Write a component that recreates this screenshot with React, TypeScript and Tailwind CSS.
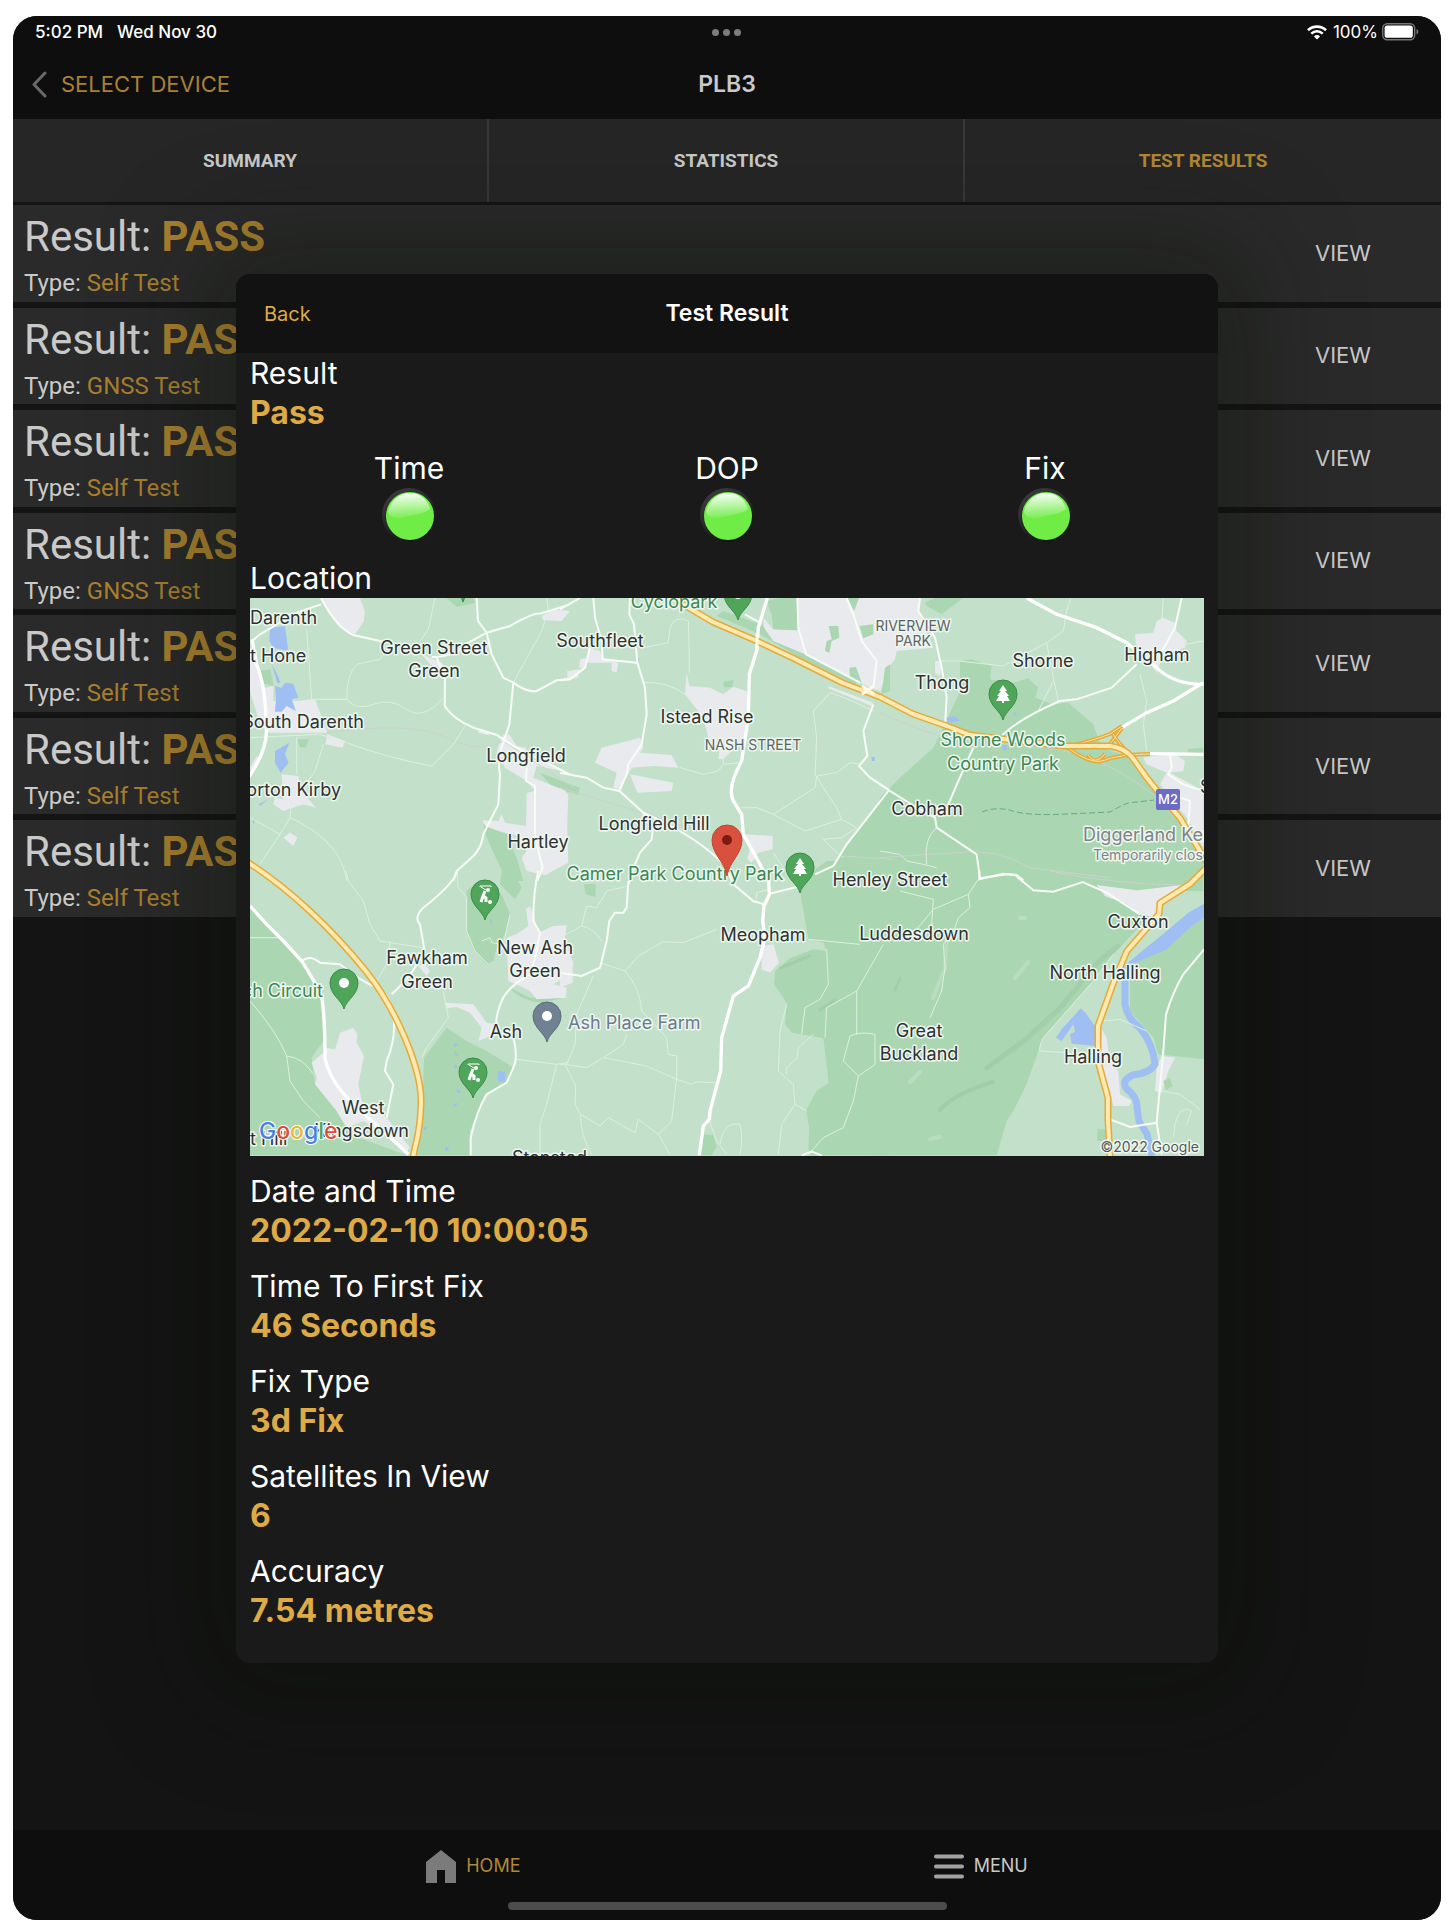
import { clsx } from 'clsx'

type Row = { result: string; type: string }

const rows: Row[] = [
  { result: 'PASS', type: 'Self Test' },
  { result: 'PASS', type: 'GNSS Test' },
  { result: 'PASS', type: 'Self Test' },
  { result: 'PASS', type: 'GNSS Test' },
  { result: 'PASS', type: 'Self Test' },
  { result: 'PASS', type: 'Self Test' },
  { result: 'PASS', type: 'Self Test' },
]

const tabs = ['SUMMARY', 'STATISTICS', 'TEST RESULTS']
const lights = ['Time', 'DOP', 'Fix']

const details = [
  { label: 'Date and Time', value: '2022-02-10 10:00:05' },
  { label: 'Time To First Fix', value: '46 Seconds' },
  { label: 'Fix Type', value: '3d Fix' },
  { label: 'Satellites In View', value: '6' },
  { label: 'Accuracy', value: '7.54 metres' },
]

// The map is split in six tiles, each drawn at three times the size it is shown at.
type Tile = {
  at: [number, number]
  woods: string
  towns: string
  greens?: string
  water?: string
  lanes: string
  rail?: string
  roads: string
  major: string
}

const tiles: Tile[] = [
  {
    at: [-10, -7],
    woods:
      'M620 21L700 21L705 35L650 48Z M60 240L92 235L100 285L62 275Z M172 445h35l-10 25l-18-2Z M730 700L800 730L830 800L850 870L800 870L740 740Z M900 545L990 580L990 605L930 580Z',
    towns:
      'M243 21L360 21L374 60L372 90L345 130L300 110L262 60Z M30 170L50 210L75 290L100 285L100 330L175 330L225 323L262 425L88 425L60 400L30 300Z M262 430L315 450L308 470L256 460Z M125 550L175 555L185 600L228 650L190 640L130 660L100 640L105 620L130 625Z M130 740L150 725L172 740L160 765Z M905 75L940 55L990 60L965 90L910 88Z M545 190l60 25l10 15l-40-5Z M30 530l20-35l10 10l-25 45Z M790 430L808 430L830 465L858 470L862 500L900 510L968 540L890 525L880 560L978 600L985 815L915 852L860 840L845 800L860 780L840 735L775 720L735 705L728 688L775 690L785 670L795 695L858 705L860 605L885 600L860 570L795 530L770 480Z M715 415l35 8l-5 10l-30-8Z',
    water:
      'M90 110L135 105L145 180L120 175L100 170L88 150Z M105 285L125 290L135 275L160 278L175 320L155 325L168 360L140 345L125 362L105 362L108 320Z M105 480L148 455L135 490L146 515L122 545L105 515Z M95 220l12 20l15 35l-10 0Z M55 640l30-15l-25 20Z M38 690l8-10l-6 22Z',
    lanes:
      'M200 115L215 325L320 325Q320 250 350 220L420 205L450 165M540 150L565 115L585 21M320 325Q350 360 400 340T500 355T610 320M30 440L240 430L320 455Q440 500 575 525L640 460L675 405M170 440V550M250 460L225 540L190 590M30 680L120 730L150 680L155 630M150 680Q280 740 310 830L322 870M120 730L60 820M820 275L850 220L905 120L925 60L920 21',
    rail: 'M260 425Q520 390 620 440T790 450L1000 590',
    roads:
      'M243 40L170 65L60 130L36 150M243 21Q290 110 340 132L430 152M575 198Q640 200 680 158L740 125L810 105Q880 65 900 68L990 40M710 21L714 90L740 125L755 190L790 260L820 275Q860 305 890 300L950 268L990 264M590 200L615 260L614 345Q640 385 700 410L770 432L820 465L990 550M820 275L808 400L790 455Q770 500 780 550L775 640L730 730Q725 770 700 795L650 840L640 870M860 530L858 570L885 585L885 740L908 830L892 870',
    major: 'M36 145L50 220Q78 290 78 400Q88 470 25 560',
  },
  {
    at: [310, -7],
    woods:
      'M490 60L600 100L760 200L900 270L885 280L720 200L600 130L470 75Z M490 272l30-5l-3 22l-25 0Z M0 570L60 590L55 612L0 590Z M990 600L860 760L820 825L760 850L720 900L1000 900Z',
    towns:
      'M610 80L640 115L714 118L714 21L990 21L990 225L960 300L930 290L735 190L640 150L612 110Z M380 245L388 285L450 290L490 310L520 288L560 300L565 420L545 450L490 505L475 505L478 480L445 440L430 380L375 310Z M125 470L240 440L250 470L240 485L335 492L355 530L280 525L215 530L180 595L160 590L170 545L105 515Z M210 550L340 575L335 600L232 605Z M85 170L120 180L128 205L175 215L170 245L155 240L155 215L80 215L75 235L58 230L60 205L80 200Z M22 240l40-5l-10 25l-30 5Z M0 590L25 610L20 740L0 800Z M555 730L638 735L638 775L595 785L575 815L562 805L570 770Z M805 285L940 335L935 345L805 292Z',
    greens:
      'M620 30L660 21L712 21L710 118L640 115L635 70Z M806 105L835 105L838 140L815 150L808 185L795 180L800 150L815 145Z M868 230L888 228L905 275L870 265Z M862 21h35l-15 40Z M898 105l42-5v30l-30 12Z M975 230L990 220L990 300L965 310Z',
    water: 'M934 498l10 0l0 12l-8 0Z M230 202l8 2l-2 8l-6-2Z',
    lanes:
      'M250 275Q320 270 375 310M250 170L325 155L330 110Q345 70 385 90L388 200V245M360 530L430 550L475 540L490 520L540 515M490 505V520M810 305Q860 320 940 360M900 520L870 515L830 545L770 555L765 590L640 670L590 650L545 650M770 555L790 590L830 650L845 685M640 670L735 720L845 685L890 710L845 740L790 745L815 770L850 800M810 305L760 360L770 440L765 555M640 785L670 830',
    rail: 'M0 590L230 660L420 720M850 795L1000 805',
    roads:
      'M0 55L60 21M100 21L105 80L125 150L128 205L230 215M210 21L208 70L222 100L232 215L255 290L260 370L245 460L205 520L200 550L178 600M0 268L30 265L75 230L90 170M0 545L80 560L130 590L178 600L250 665L278 715L275 745L240 785L225 820L205 880M250 665Q420 740 500 830L520 880M555 70L600 95M712 21L715 110L738 190L900 275M860 21L880 70L905 150L950 210L940 290M940 340L910 420L922 495L897 525L930 560L985 595M985 600L860 760L820 825L765 850',
    major: 'M622 21L595 110L590 180L568 250L565 380L545 510Q500 590 520 630L545 670L550 730L600 820L625 870',
  },
  {
    at: [630, -7],
    woods:
      'M240 210L275 205L335 225L330 265L400 275L445 262L475 290L465 320L520 340L565 335L640 400L665 470L760 500L860 640L970 800V900H0V620L60 560L160 470L195 400L240 300Z M135 35L165 21L250 21L185 70L140 45Z M920 475l50-5v20l-35 5Z',
    towns:
      'M0 21L120 21L115 60L160 170L50 180L45 205L0 260Z M165 210h20l-5 45l-15-10Z M765 130L820 125L830 90L850 80L885 95L890 120L920 150L915 170L850 190L830 245L800 200L768 160Z M790 500L880 485L915 510L910 540L870 545L970 600L970 770L920 680L840 580L860 545L800 520Z',
    water: 'M198 380L225 375L240 390L205 395Z M365 462h15v15h-12Z M400 362l12 8l-8 4Z',
    lanes:
      'M180 210L240 210L280 215L370 225L500 155L550 120L560 60L572 21M500 155L520 260L535 330M520 270L475 360M850 21L845 90M800 480L790 400L800 330L780 250M970 150L890 165M140 820Q130 740 170 710M0 780L60 790L80 810L130 820L170 830',
    rail: 'M0 365Q120 420 200 440L540 475Q700 510 830 620L970 770M0 800L230 785Q350 770 450 830L690 860',
    roads:
      'M120 21L115 60L165 140L185 230L200 320L195 410M280 470L235 570L205 640M350 450Q400 390 540 330L590 325L695 290L770 220M905 21L885 110L835 200M0 580L30 600L110 650L165 680L170 710L290 790L300 862L380 850L410 852L430 868M870 490L875 530L865 550L910 580L970 600M900 620L930 630L925 700L940 760',
    major: 'M440 21L530 70L650 110L740 155L830 230Q880 280 970 280M970 275L880 330L800 365L725 410M810 488L970 490',
  },
  {
    at: [-10, 273],
    woods:
      'M30 105L185 270L240 370L250 510L215 560L225 640L290 720L330 790L500 853H30Z M680 60Q740 0 790 80L810 130L795 190L770 230L760 270L740 280L700 235L680 180Z M785 0L820 0L845 50L825 85L780 40Z M620 470L680 510L740 540L820 590L800 640L735 670L690 780L690 853L520 853L545 780L552 560Z M810 350l60 30h100l-60 15Q840 390 810 350Z',
    towns:
      'M290 520L300 485L340 470L352 490L350 515L372 555L355 640L365 690L440 740L510 830L500 840L420 780L370 750L320 770L290 720L225 640L230 620L215 575L250 545L255 530L285 535Z M858 115L870 105L880 130L895 185L940 165L980 163L975 200L1000 280L990 310L940 340L980 350L978 380L890 385L870 360L840 345L805 330L800 200L830 190L865 165Z M615 395L700 400L740 455L770 460L765 490L715 510L725 470L690 425L650 408L620 412Z M535 285l20-5l15 20l-10 15Z M890 0h45l-15 12Z',
    water:
      'M775 600l20 3v30l-22-2Z M640 515l15 5l-10 8Z M645 540l12 15l-12-3Z M645 580l10 10l-12 2Z M648 652l18 12l-14 2Z M640 700l14-4l-8 12Z M615 828h10v12h-10Z M750 145l8 5l-5 8Z M552 768h8v8h-8Z',
    lanes:
      'M30 200H115M318 0L325 30L370 90L390 160L420 210L550 230M450 210L440 280L410 330M30 390Q110 480 140 555L150 630L190 690L240 740M140 555Q190 560 220 610M610 360L625 440L560 530L545 560M650 0L655 50L680 80V180L705 240L745 280M725 210L750 200L755 215L790 220L810 130M830 565L950 580L985 575M950 580L920 700L900 760V853',
    roads:
      'M185 270Q210 250 240 275L300 280Q360 330 410 350Q450 370 460 430Q470 500 440 570L435 600L460 640L440 740M455 370Q530 300 553 235L540 160Q520 140 550 110Q640 40 652 0M895 0Q880 60 880 150L900 185L885 260L870 310Q800 350 785 390Q765 440 770 460M820 500Q835 560 820 590L800 635L740 670Q710 720 692 800V853',
    major: 'M30 105L80 160L130 210L185 270L240 360Q255 400 255 560Q265 620 330 690L440 790L505 850',
  },
  {
    at: [310, 273],
    woods:
      'M720 60L745 205L790 215L800 240L760 235L690 262L645 300L642 340L680 395L675 460L695 485L790 502L806 635L770 660L738 718L748 770L745 835L755 853L1000 853V-30L800-30L760 0Z M72 40l35-2v40l-30-8Z M430 790l30 3l10 35l-15 25h-35Z',
    towns: 'M605 225L640 220L657 275L630 305L605 295Z M0 265L38 268V335L0 350Z',
    lanes:
      'M0 200L65 165Q100 170 125 210M65 165L80 105L110 110L140 60L205 45M120 275L195 300L235 255L310 212L370 215L470 175M195 300Q240 350 245 420L320 500L325 550L350 555V620L335 750L295 790L235 745L225 785L145 740L120 765L62 730L45 700L47 645L15 580M100 315L50 430L45 520L20 580H0M15 580L80 590L130 560L190 520L200 490M130 560L260 585L350 625L395 640L410 633L465 635M62 730Q60 790 95 850M295 790L330 850M590 85V65L630 55M745 205L900 220M800 235L805 340L780 385L735 410L725 490M970 220L890 360L800 410L795 500M890 360V490M680 400L660 480L655 600L700 640L705 700L665 760L655 850M760 490L715 530L712 560L680 590V610M870 495Q900 480 945 490V580L895 615L850 570L870 495M895 615L880 690L850 770L790 800L755 840M705 700L740 720M445 740L470 810L500 850M480 820Q490 750 540 760Q550 800 540 850',
    roads:
      'M205 30L200 110L190 125L165 125L148 150L140 210L120 290L65 315L0 305M520 40L580 90L612 100M628 68L710 48M725 853L755 842L785 853',
    major:
      'M625 0L628 70L612 105L608 150L615 200L600 260L565 345L520 375L485 500L482 600L450 720L448 745L430 765L418 853',
  },
  {
    at: [630, 273],
    woods:
      'M-30-30H900V40L700 250L640 330L490 500L475 540L440 640L400 720L380 750L350 853H-30Z M972 140L750 280V420L820 500L835 550L972 565Z',
    towns:
      'M650 42L770 58L800 55L905 42L840 95L830 140L780 130L740 100L675 75Z M665 475L680 500L690 580L715 600L720 670L755 690L748 705L700 705L690 660L660 580Z M845 555L885 560L865 600L845 665L825 660L830 590Z',
    greens: 'M850 630l20-10l8 25l-20 12Z M652 775h28v35h-28Z',
    water:
      'M972 98L925 125L860 180L725 290V330H745L745 285L860 235L935 165L972 140Z M602 412L620 430L655 480L650 525L575 518L570 490L585 482L580 460L545 510L528 500L545 475Z',
    lanes:
      'M60 60L160 85L155 165M110 175L160 115L265 70L295 25M265 70L270 110L235 140L225 170L190 220L195 290L185 360L150 440M700 250L640 330L490 500Q475 530 480 540L560 545M845 660L900 670L960 715M880 800L885 760Q900 700 935 720L920 760M670 450L720 445L800 480',
    rail: 'M510 0Q700 40 905 42',
    roads:
      'M298 0V25L370 8L405 12L460 58L520 62L608 33L680 65L780 130M690 745L750 768L830 755L845 850M830 755L850 540L858 430Q880 360 910 310L972 235',
    major: '',
  },
]

const motorways = [
  'M-6 262C40 290 85 335 115 372S172 470 171 505S166 540 163 560',
  'M429 4L463 24L507 43L543 60L593 85L630 99L663 116L697 128L720 137L753 141L813 148L860 148Q874 150 882 159L897 180L913 200L930 220L950 253L958 266',
  'M956 270L940 286L910 305L909 316L877 353L863 386L848 428V463L858 500V522L860 560',
]
const slipRoads =
  'M816 149Q845 142 860 136L872 128M818 150Q840 166 852 163Q870 156 900 156M860 146L872 130M863 136Q870 148 882 158M838 157Q845 168 855 156'

type Label = { x: number; y: number; text: string; anchor?: 'start' | 'end'; tone?: string }

const labels: Label[] = [
  { x: 0, y: 26, text: 'Darenth', anchor: 'start' },
  { x: 0, y: 64, text: 't Hone', anchor: 'start' },
  { x: 114, y: 130, text: 'South Darenth', anchor: 'end' },
  { x: 91, y: 198, text: 'orton Kirby', anchor: 'end' },
  { x: 184, y: 56, text: 'Green Street' },
  { x: 184, y: 79, text: 'Green' },
  { x: 350, y: 49, text: 'Southfleet' },
  { x: 424, y: 10, text: 'Cyclopark', tone: 'fill-[#3c8752]' },
  { x: 457, y: 125, text: 'Istead Rise' },
  { x: 793, y: 69, text: 'Shorne' },
  { x: 907, y: 63, text: 'Higham' },
  { x: 692, y: 91, text: 'Thong' },
  { x: 753, y: 148, text: 'Shorne Woods', tone: 'fill-[#3c8752]' },
  { x: 753, y: 172, text: 'Country Park', tone: 'fill-[#3c8752]' },
  { x: 677, y: 217, text: 'Cobham' },
  { x: 833, y: 243, text: 'Diggerland Kent', anchor: 'start', tone: 'fill-[#7d8487]' },
  { x: 950, y: 195, text: 'S', anchor: 'start' },
  { x: 276, y: 164, text: 'Longfield' },
  { x: 404, y: 232, text: 'Longfield Hill' },
  { x: 288, y: 250, text: 'Hartley' },
  { x: 425, y: 282, text: 'Camer Park Country Park', tone: 'fill-[#3c8752]' },
  { x: 640, y: 288, text: 'Henley Street' },
  { x: 513, y: 343, text: 'Meopham' },
  { x: 664, y: 342, text: 'Luddesdown' },
  { x: 177, y: 366, text: 'Fawkham' },
  { x: 177, y: 390, text: 'Green' },
  { x: 285, y: 356, text: 'New Ash' },
  { x: 285, y: 379, text: 'Green' },
  { x: 73, y: 399, text: 'ch Circuit', anchor: 'end', tone: 'fill-[#3c8752]' },
  { x: 256, y: 440, text: 'Ash' },
  { x: 318, y: 431, text: 'Ash Place Farm', anchor: 'start', tone: 'fill-[#6b7a90]' },
  { x: 669, y: 439, text: 'Great' },
  { x: 669, y: 462, text: 'Buckland' },
  { x: 888, y: 330, text: 'Cuxton' },
  { x: 855, y: 381, text: 'North Halling' },
  { x: 843, y: 465, text: 'Halling' },
  { x: 113, y: 516, text: 'West' },
  { x: 159, y: 539, text: 'Kingsdown', anchor: 'end' },
  { x: 0, y: 547, text: 't Hill', anchor: 'start' },
  { x: 262, y: 566, text: 'Stansted', anchor: 'start' },
]

const districts = [
  { x: 503, y: 152, text: 'NASH STREET' },
  { x: 663, y: 33, text: 'RIVERVIEW' },
  { x: 663, y: 48, text: 'PARK' },
]

type PinKind = 'tree' | 'golf' | 'dot'
const pins: { x: number; y: number; kind: PinKind; grey?: boolean }[] = [
  { x: 753, y: 122, kind: 'tree' },
  { x: 550, y: 295, kind: 'tree' },
  { x: 235, y: 322, kind: 'golf' },
  { x: 223, y: 500, kind: 'golf' },
  { x: 94, y: 411, kind: 'dot' },
  { x: 488, y: 22, kind: 'dot' },
  { x: 213, y: 4, kind: 'dot' },
  { x: 297, y: 444, kind: 'dot', grey: true },
]

function Pin({ x, y, kind, grey }: { x: number; y: number; kind: PinKind; grey?: boolean }) {
  return (
    <g transform={`translate(${x} ${y})`}>
      <path
        d="M0 0C-2-9-14-14-14-26A14 14 0 1 1 14-26C14-14 2-9 0 0Z"
        fill={grey ? '#6f8192' : '#4fa65a'}
        stroke={grey ? '#5c6d7d' : '#3b8b4b'}
      />
      {kind === 'dot' && <circle cy={-26} r={5} fill="#fff" />}
      {kind === 'tree' && <path d="M0-35L4-29H2L6-24H4L7-19H1V-17H-1V-19H-7L-4-24H-6L-2-29H-4Z" fill="#fff" />}
      {kind === 'golf' && (
        <g fill="none" stroke="#fff" strokeWidth={2}>
          <path d="M-5-33V-34H6V-33" strokeWidth={1} />
          <path d="M-4-33L1-30" strokeWidth={1} />
          <path d="M0-29L-2-24L1-22V-18M-2-24L-4-18" strokeWidth={3} />
          <circle cx={3} cy={-30} r={2} fill="#fff" stroke="none" />
          <circle cx={5} cy={-18} r={2} fill="#fff" stroke="none" />
        </g>
      )}
    </g>
  )
}

function TileLayer({ layer, className }: { layer: Exclude<keyof Tile, 'at'>; className: string }) {
  return (
    <g className={className}>
      {tiles.map((tile, i) =>
        tile[layer] ? (
          <path key={i} transform={`translate(${tile.at[0]} ${tile.at[1]}) scale(${1 / 3})`} d={tile[layer]} />
        ) : null,
      )}
    </g>
  )
}

function LocationMap() {
  return (
    <svg viewBox="0 0 954 558" className="block w-full overflow-hidden bg-[#c3e1ca]" role="img" aria-label="Map of the fix location">
      <TileLayer layer="woods" className="fill-[#abd6b2]" />
      <g fill="none" stroke="#98c8a2" strokeLinecap="round" strokeLinejoin="round" opacity={0.5}>
        <path d="M737 470L775 442L810 410L850 362L868 348" strokeWidth={5} />
        <path d="M690 512Q705 495 743 484" strokeWidth={4} />
        <path d="M530 370L560 358M570 412L585 402M650 380L645 392" strokeWidth={3} />
      </g>
      <g fill="none" stroke="#c3e1ca" strokeLinecap="round" opacity={0.6}>
        <path d="M697 335L695 370L683 400M765 380L778 364M660 484L670 474M680 541L690 539M770 320h5" strokeWidth={4} />
      </g>
      <TileLayer layer="towns" className="fill-[#e8eaed]" />
      <TileLayer layer="greens" className="fill-[#abd6b2]" />
      <TileLayer layer="water" className="fill-[#9fbff3]" />
      <path
        d="M875 380V406Q877 420 890 430Q903 446 905 466Q900 475 883 477Q870 483 877 491Q888 500 887 510L889 523L897 536L902 558"
        fill="none"
        stroke="#9fbff3"
        strokeWidth={7}
      />
      <TileLayer layer="rail" className="fill-none stroke-[#c9d3cd] stroke-3" />
      <TileLayer layer="lanes" className="fill-none stroke-[#dcf0df] stroke-3" />
      <TileLayer layer="roads" className="fill-none stroke-[#f8fcf7] stroke-6" />
      <TileLayer layer="major" className="fill-none stroke-white stroke-10" />
      <path
        d="M732 214Q747 208 763 213T817 216L860 214Q870 208 878 205L904 202"
        fill="none"
        stroke="#63ab82"
        strokeDasharray="6 3"
      />
      <path d={slipRoads} fill="none" stroke="#e3ab3c" strokeWidth={4} />
      <path d={slipRoads} fill="none" stroke="#fbe3a0" strokeWidth={1} />
      <g fill="none" stroke="#e3ab3c" strokeWidth={7} strokeLinejoin="round">
        {motorways.map((d) => <path key={d} d={d} />)}
      </g>
      <g fill="none" stroke="#ffe9ae" strokeWidth={4} strokeLinejoin="round">
        {motorways.map((d) => <path key={d} d={d} />)}
      </g>
      <path d="M507 36V52M612 88L624 96M612 96L624 88" stroke="#fffbe8" strokeWidth={3} />

      {pins.map((pin) => <Pin key={`${pin.x}-${pin.y}`} {...pin} />)}

      <g className="text-[18px]" stroke="#eef7ef" strokeWidth={3} strokeLinejoin="round" paintOrder="stroke">
        {labels.map((label) => (
          <text
            key={`${label.text}-${label.y}`}
            x={label.x}
            y={label.y}
            textAnchor={label.anchor ?? 'middle'}
            className={clsx(label.tone ?? 'fill-[#2f3133]')}
          >
            {label.text}
          </text>
        ))}
        <text x={843} y={262} className="fill-[#7d8487] text-[14px]">Temporarily closed</text>
        {districts.map((district) => (
          <text key={district.text} x={district.x} y={district.y} textAnchor="middle" className="fill-[#5d6365] text-[14px]">
            {district.text}
          </text>
        ))}
        <text x={949} y={554} textAnchor="end" className="fill-[#55595b] text-[14px]">©2022 Google</text>
      </g>

      <rect x={906} y={191} width={24} height={21} rx={2} fill="#6c6cc4" />
      <text x={918} y={206} textAnchor="middle" className="fill-white text-[13px] font-medium">M2</text>

      <path d="M477 278C475 264 462 256 462 242A15 15 0 1 1 492 242C492 256 479 264 477 278Z" fill="#d9503f" stroke="#c44536" />
      <circle cx={477} cy={242} r={5} fill="#7c1b13" />

      <text x={9} y={541} className="text-[23px] font-medium" stroke="#fff" strokeWidth={2} strokeLinejoin="round" paintOrder="stroke">
        <tspan className="fill-[#4a7fe0]">G</tspan>
        <tspan className="fill-[#d94c3f]">o</tspan>
        <tspan className="fill-[#eab83b]">o</tspan>
        <tspan className="fill-[#4a7fe0]">g</tspan>
        <tspan className="fill-[#4fa65a]">l</tspan>
        <tspan className="fill-[#d94c3f]">e</tspan>
      </text>
    </svg>
  )
}

function StatusLight() {
  return (
    <svg viewBox="0 0 55 55" className="size-[55px]" role="img" aria-label="OK">
      <defs>
        <linearGradient id="rim" x1="0.2" y1="0" x2="0.8" y2="1">
          <stop offset="0" stopColor="#3c3c3c" />
          <stop offset="0.5" stopColor="#262626" />
          <stop offset="1" stopColor="#101010" />
        </linearGradient>
        <linearGradient id="shine" x1="0.45" y1="0" x2="0.55" y2="1">
          <stop offset="0" stopColor="#fff" stopOpacity={0.95} />
          <stop offset="1" stopColor="#fff" stopOpacity={0.06} />
        </linearGradient>
      </defs>
      <circle cx="27" cy="27" r="27" fill="url(#rim)" />
      <circle cx="28" cy="28" r="24" fill="#6fec46" />
      <path d="M6 24C8 13 17 5 28 5S46 12 48 21C42 27 26 27 20 30C12 31 7 28 6 24Z" fill="url(#shine)" />
    </svg>
  )
}

function StatusBar() {
  return (
    <div className="grid grid-cols-3 items-center pt-[5px] pr-[22px] pl-[22px] text-[17px] leading-[22px] font-medium text-white">
      <div className="flex gap-[14px]">
        <span>5:02 PM</span>
        <span>Wed Nov 30</span>
      </div>
      <div className="flex justify-center gap-1">
        <span className="size-[7px] rounded-full bg-[#7d7d7d]" />
        <span className="size-[7px] rounded-full bg-[#7d7d7d]" />
        <span className="size-[7px] rounded-full bg-[#7d7d7d]" />
      </div>
      <div className="flex items-center justify-end gap-1 font-normal">
        <svg viewBox="0 0 20 15" className="mr-[2px] h-[15px] w-5" fill="none" stroke="#fff" strokeWidth="2.6">
          <path d="M1 5.2C6 .4 14 .4 19 5.2" />
          <path d="M4.3 8.6C7.6 5.5 12.4 5.5 15.7 8.6" />
          <path d="M10 14.6L6.9 11.4Q10 8.7 13.1 11.4Z" fill="#fff" stroke="none" />
        </svg>
        <span>100%</span>
        <svg viewBox="0 0 37 18" className="h-[18px] w-[37px]">
          <rect x="0.7" y="0.7" width="32" height="16" rx="4.5" fill="none" stroke="#777" strokeWidth="1.4" />
          <rect x="2.6" y="2.6" width="28.2" height="12.2" rx="2.6" fill="#fff" />
          <path d="M34.5 6C37 7 37 10.500 34.500 11.500Z" fill="#777" />
        </svg>
      </div>
    </div>
  )
}

function ResultRow({ result, type }: Row) {
  return (
    <li className="flex bg-[#2a2a2a] font-['Roboto',sans-serif] text-[#c9c9c9]">
      <div className="flex-1 pt-[7px] pl-[11px]">
        <p className="text-[42px] leading-[50px]">
          Result: <strong className="font-bold text-[#a9802f]">{result}</strong>
        </p>
        <p className="pt-[7px] text-2xl leading-7">
          Type: <span className="text-[#a9802f]">{type}</span>
        </p>
      </div>
      <button type="button" className="w-[196px] font-['Inter',sans-serif] text-[22px]">
        VIEW
      </button>
    </li>
  )
}

function TestResultDialog() {
  return (
    <section
      role="dialog"
      aria-labelledby="dialog-title"
      className="w-full max-w-[982px] overflow-hidden rounded-[14px] bg-[#1a1a1a] text-white shadow-[0_0_110px_40px_rgba(6,16,0,0.3)]"
    >
      <header className="grid h-[79px] grid-cols-3 items-center bg-[#121212] px-7 pt-px">
        <button type="button" className="justify-self-start text-[20px] text-[#deaa45]">Back</button>
        <h2 id="dialog-title" className="text-center text-[23px] font-semibold">Test Result</h2>
      </header>
      <div className="flex flex-col gap-[15px] px-[14px] pb-8 text-[30px] leading-10">
        <div>
          <p>Result</p>
          <p className="text-[32px] font-bold text-[#deaa45]">Pass</p>
        </div>
        <div className="grid grid-cols-3">
          {lights.map((name) => (
            <div key={name} className="flex flex-col items-center">
              <span>{name}</span>
              <StatusLight />
            </div>
          ))}
        </div>
        <div>
          <p>Location</p>
          <LocationMap />
        </div>
        {details.map(({ label, value }) => (
          <div key={label}>
            <p>{label}</p>
            <p className="text-[32px] font-bold text-[#deaa45]">{value}</p>
          </div>
        ))}
      </div>
    </section>
  )
}

export default function App() {
  return (
    <div className="flex min-h-screen bg-white pt-4 pr-[9px] pb-2 pl-[13px] font-['Inter',sans-serif]">
      <div className="relative flex flex-1 flex-col overflow-hidden rounded-[24px] bg-[#141414]">
        <header className="h-[103px] bg-[#0e0e0e]">
          <StatusBar />
          <div className="grid grid-cols-3 items-center pt-6 pr-[18px] pl-[18px]">
            <button type="button" className="flex items-center gap-[14px] text-[22px] leading-8 text-[#a98136]">
              <svg viewBox="0 0 16 27" className="h-[27px] w-4" fill="none" stroke="#6a6a6a" strokeWidth="3" strokeLinecap="round" strokeLinejoin="round">
                <path d="M14 2L3 13.500L14 25" />
              </svg>
              SELECT DEVICE
            </button>
            <h1 className="text-center text-[23px] font-semibold text-[#c9c9c9]">PLB3</h1>
          </div>
        </header>

        <nav className="grid h-[83px] grid-cols-3 divide-x-2 divide-[#383838] bg-[#262626] font-['Roboto',sans-serif] text-[19px] font-bold">
          {tabs.map((tab) => (
            <button key={tab} type="button" className={clsx('pt-[2px]', tab === 'TEST RESULTS' ? 'text-[#b18733]' : 'text-[#c9c9c9]')}>
              {tab}
            </button>
          ))}
        </nav>

        <ul className="mt-[3px] grid min-h-[712px] auto-rows-fr gap-[6px]">
          {rows.map((row, i) => <ResultRow key={i} {...row} />)}
        </ul>

        <div className="absolute inset-0 flex items-center justify-center">
          <TestResultDialog />
        </div>

        <footer className="relative mt-auto flex h-[90px] flex-col items-center bg-[#0e0e0e] text-[18px]">
          <div className="flex w-full justify-evenly pt-[18px] leading-9">
            <a href="#home" className="flex items-center gap-[10px] text-[#b08838]">
              <svg viewBox="0 0 30 33" className="h-[33px] w-[30px]" fill="#7b7b7b">
                <path d="M15 0L30 12V33H19V20H11V33H0V12Z" />
              </svg>
              HOME
            </a>
            <button type="button" className="flex items-center gap-[10px] text-[#c9c9c9]">
              <svg viewBox="0 0 30 25" className="h-[25px] w-[30px]" stroke="#a3a3a3" strokeWidth="4" strokeLinecap="round">
                <path d="M2 2.500H28M2 12.500H28M2 22.500H28" />
              </svg>
              MENU
            </button>
          </div>
          <div className="mt-[18px] h-2 w-[439px] rounded-full bg-[#4c4c4c]" />
        </footer>
      </div>
    </div>
  )
}
